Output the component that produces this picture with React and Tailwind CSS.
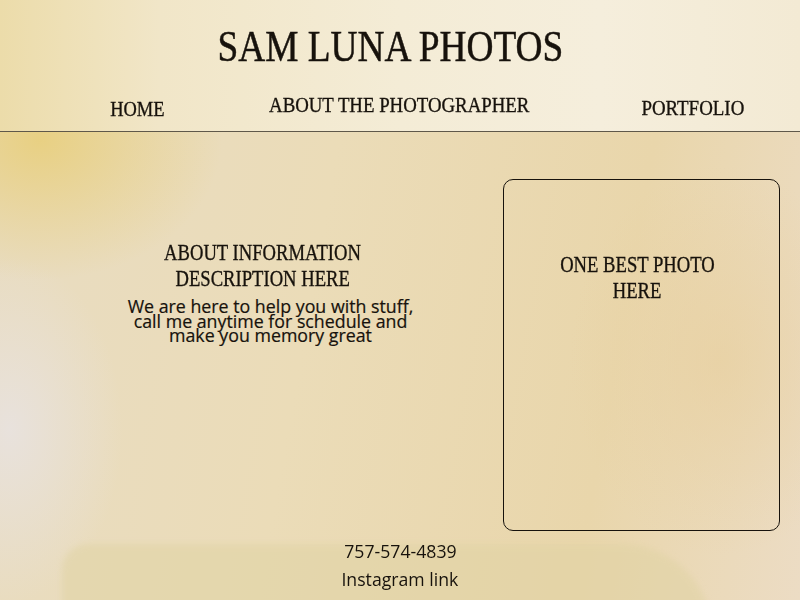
export default function App() {
  const serif = { fontFamily: '"Liberation Serif", "Times New Roman", serif' };
  const sans = { fontFamily: '"Open Sans", "Noto Sans", sans-serif' };
  return (
    <div className="relative w-[800px] h-[600px] overflow-hidden text-[#17120c] bg-[linear-gradient(100deg,#e8dcc2_0%,#ebdcb8_40%,#e9d6ab_75%,#ecdcc4_100%)]">
      {/* background glows */}
      <div className="absolute inset-0 bg-[radial-gradient(ellipse_260px_200px_at_40px_140px,rgba(232,206,120,0.85),transparent_70%)]" />
      <div className="absolute inset-0 bg-[radial-gradient(ellipse_150px_230px_at_10px_430px,rgba(232,226,222,0.95),transparent_75%)]" />
      <div className="absolute inset-0 bg-[radial-gradient(ellipse_200px_260px_at_720px_360px,rgba(232,208,160,0.7),transparent_75%)]" />
      {/* footer blob */}
      <div className="absolute left-[62px] top-[544px] w-[650px] h-[90px] rounded-tl-[40px] rounded-tr-[140px] bg-[#e0d3a4] blur-[3px] opacity-55" />

      <div className="relative flex flex-col h-full">
        {/* header */}
        <header className="h-[132px] border-b border-[#5f584a] bg-[linear-gradient(90deg,#ecdcaa_0%,#f1e6c8_20%,#f4ecd6_50%,#f5eedc_75%,#f3ead4_100%)] flex flex-col">
          <div className="h-[88px] flex items-start justify-center pt-[21px] pr-[19px]" style={serif}>
            <span className="inline-block text-[45px] leading-[50px] scale-x-[0.83] whitespace-nowrap [-webkit-text-stroke:0.5px_#17120c]">SAM LUNA PHOTOS</span>
          </div>
          <nav className="flex items-start text-[22px] leading-[24px] [-webkit-text-stroke:0.35px_#17120c]" style={serif}>
            <span className="ml-[137px] mt-[9px] w-0 flex justify-center"><span className="inline-block scale-x-[0.84] whitespace-nowrap">HOME</span></span>
            <span className="ml-[262px] mt-[5px] w-0 flex justify-center"><span className="inline-block scale-x-[0.855] whitespace-nowrap">ABOUT THE PHOTOGRAPHER</span></span>
            <span className="ml-[294px] mt-[8px] w-0 flex justify-center"><span className="inline-block scale-x-[0.86] whitespace-nowrap">PORTFOLIO</span></span>
          </nav>
        </header>

        {/* main */}
        <main className="flex pt-[47px]">
          <section className="w-[503px] flex justify-center">
            <div className="w-[320px] ml-[38px] mt-[61px] flex flex-col items-center text-center">
              <div style={serif} className="text-[23px] leading-[26px] mr-[16px] [-webkit-text-stroke:0.35px_#17120c]">
                <div><span className="inline-block scale-x-[0.81] whitespace-nowrap">ABOUT INFORMATION</span></div>
                <div><span className="inline-block scale-x-[0.81] whitespace-nowrap">DESCRIPTION HERE</span></div>
              </div>
              <p className="mt-[7px] text-[17.8px] leading-[14.5px] whitespace-nowrap [-webkit-text-stroke:0.2px_#17120c]" style={sans}>
                We are here to help you with stuff,<br />call me anytime for schedule and<br />make you memory great
              </p>
            </div>
          </section>
          <section className="w-[277px] h-[352px] border border-[#17120c] rounded-[10px] flex flex-col items-center pt-[72px] pr-[8px] text-[23px] leading-[26px] text-center [-webkit-text-stroke:0.35px_#17120c]" style={serif}>
            <div><span className="inline-block scale-x-[0.81] whitespace-nowrap">ONE BEST PHOTO</span></div>
            <div><span className="inline-block scale-x-[0.81] whitespace-nowrap">HERE</span></div>
          </section>
        </main>

        {/* footer */}
        <footer className="flex flex-col items-center mt-[6px] text-[19px] leading-[28px]" style={sans}>
          <span className="inline-block scale-x-[0.93] whitespace-nowrap">757-574-4839</span>
          <span className="inline-block scale-x-[0.93] whitespace-nowrap">Instagram link</span>
        </footer>
      </div>
    </div>
  );
}
